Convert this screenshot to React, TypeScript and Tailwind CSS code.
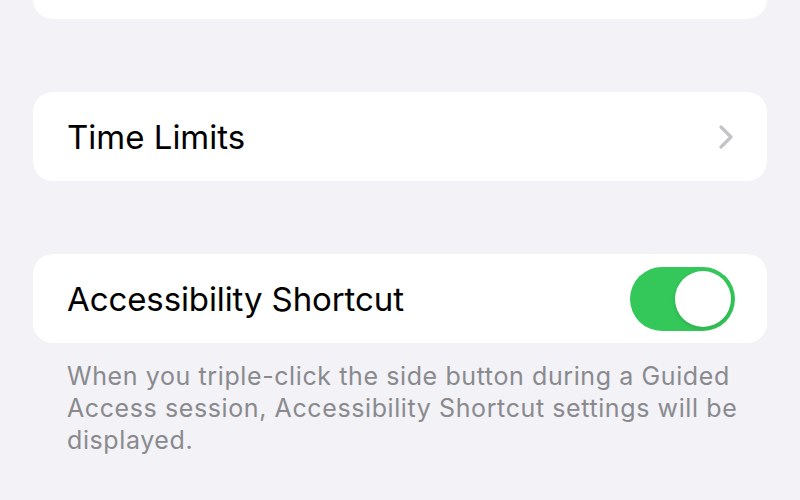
export default function App() {
  return (
    <div
      className="w-[800px] h-[500px] overflow-hidden bg-[#f2f2f7] flex flex-col px-[33px]"
      style={{ fontFamily: 'Inter, "Noto Sans", sans-serif' }}
    >
      {/* previous group, cut off at the top */}
      <div className="-mt-[70px] h-[89px] bg-white rounded-[20px] shrink-0" />

      {/* Time Limits */}
      <div className="mt-[73px] h-[89px] bg-white rounded-[20px] flex items-center justify-between pl-[34px] pr-[33px] shrink-0">
        <span className="text-[33px] text-black pt-[2px]">Time Limits</span>
        <svg width="16" height="24" viewBox="0 0 16 24" fill="none">
          <path
            d="M3 2l10 10-10 10"
            stroke="#c4c4c7"
            strokeWidth="3.2"
            strokeLinecap="round"
            strokeLinejoin="round"
          />
        </svg>
      </div>

      {/* Accessibility Shortcut */}
      <div className="mt-[73px] h-[89px] bg-white rounded-[20px] flex items-center justify-between pl-[34px] pr-[32px] shrink-0">
        <span className="text-[33px] text-black tracking-[-0.1px] pt-[2px]">Accessibility Shortcut</span>
        <div className="w-[105px] h-[64px] rounded-full bg-[#34c759] flex items-center justify-end p-[4px]">
          <div className="w-[56px] h-[56px] rounded-full bg-white shadow-[0_2px_4px_rgba(0,0,0,0.12)]" />
        </div>
      </div>

      <p className="mt-[17px] pl-[34px] pr-[16px] text-[25px] tracking-[0.6px] leading-[32px] text-[#8a8a8e]">
        When you triple-click the side button during a Guided Access session, Accessibility Shortcut settings will be displayed.
      </p>
    </div>
  );
}
